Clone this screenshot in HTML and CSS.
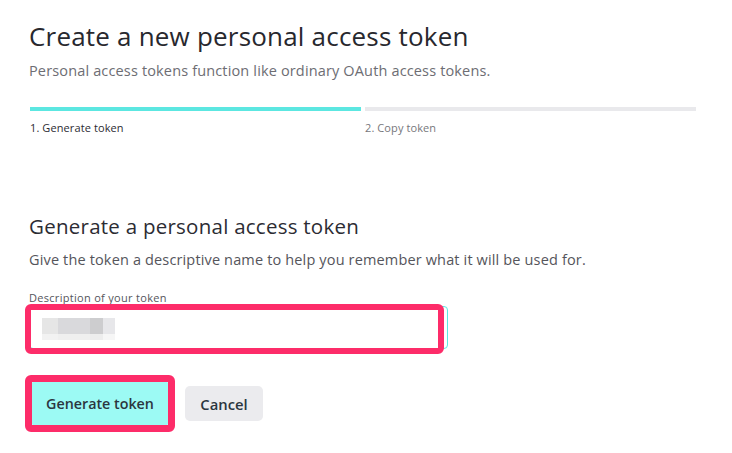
FILE: index.html
```html
<!DOCTYPE html>
<html lang="en">
<head>
<meta charset="utf-8">
<title>Create a new personal access token</title>
<link rel="stylesheet" href="styles.css">
</head>
<body>
<main class="page">
  <h1 class="title">Create a new personal access token</h1>
  <p class="subtitle">Personal access tokens function like ordinary OAuth access tokens.</p>

  <ol class="steps">
    <li class="step step-active"><span class="step-bar"></span><span class="step-label">1. Generate token</span></li>
    <li class="step"><span class="step-bar"></span><span class="step-label">2. Copy token</span></li>
  </ol>

  <section class="form">
    <h2 class="form-title">Generate a personal access token</h2>
    <p class="form-desc">Give the token a descriptive name to help you remember what it will be used for.</p>

    <label class="field-label">Description of your token</label>
    <div class="field">
      <div class="input">
        <span class="blur"><i class="b1"></i><i class="b2"></i><i class="b3"></i><i class="b4"></i></span>
      </div>
      <span class="mark mark-input"></span>
    </div>

    <div class="actions">
      <div class="mark-btn"><button class="btn btn-primary">Generate token</button></div>
      <button class="btn btn-secondary">Cancel</button>
    </div>
  </section>
</main>
</body>
</html>
```

FILE: styles.css
```css
* { box-sizing: border-box; }

body {
  margin: 0;
  background: #ffffff;
  font-family: "Open Sans", "Noto Sans", "Liberation Sans", sans-serif;
  color: #2c2c33;
}

.page {
  width: 668px;
  padding: 20px 0 0 29px;
  box-sizing: content-box;
}

.title {
  margin: 0;
  font-size: 26px;
  line-height: 32px;
  font-weight: 400;
  color: #28282e;
  letter-spacing: 0.2px;
}

.subtitle {
  margin: 9px 0 0;
  font-size: 14.5px;
  line-height: 20px;
  color: #6d6d73;
  letter-spacing: 0.15px;
}

.steps {
  list-style: none;
  margin: 26px 0 0;
  padding: 0 0 0 1px;
  display: grid;
  grid-template-columns: 331px 331px;
  column-gap: 4px;
}

.step { display: flex; flex-direction: column; }

.step-bar {
  height: 4px;
  background: #e9e9ec;
}

.step-active .step-bar { background: #5ce7e1; }

.step-label {
  margin-top: 9px;
  font-size: 11px;
  line-height: 15px;
  color: #77777c;
  letter-spacing: 0.1px;
}

.step-active .step-label { color: #2c2c33; }

.form { margin-top: 78px; }

.form-title {
  margin: 0;
  font-size: 20.5px;
  line-height: 26px;
  font-weight: 500;
  color: #2c2c33;
  letter-spacing: 0.25px;
}

.form-desc {
  margin: 11px 0 0;
  font-size: 14.5px;
  line-height: 20px;
  color: #55555b;
  letter-spacing: 0.15px;
}

.field-label {
  display: block;
  margin-top: 21px;
  font-size: 11px;
  line-height: 13px;
  color: #55555b;
  letter-spacing: 0.3px;
}

.field {
  position: relative;
  width: 419px;
  margin-top: 2px;
}

.input {
  height: 43px;
  border: 1px solid #5ce7e1;
  border-radius: 4px;
  background: #fff;
  display: flex;
  align-items: center;
  padding-left: 12px;
}

.blur {
  display: flex;
  height: 22px;
  margin-top: 2px;
}

.blur i {
  display: block;
  height: 100%;
}

.blur .b1 { width: 16px; background: linear-gradient(#e6e6e6 0, #e6e6e6 75%, #f2f2f2 75%); }
.blur .b2 { width: 32px; background: linear-gradient(#d9d9dc 0, #d9d9dc 75%, #efefef 75%); }
.blur .b3 { width: 13px; background: linear-gradient(#cdcdcf 0, #cdcdcf 75%, #ededed 75%); }
.blur .b4 { width: 12px; background: linear-gradient(#e7e7ea 0, #e7e7ea 75%, #f6f6f6 75%); }

.mark {
  position: absolute;
  border: 6px solid #fd2c69;
  border-radius: 6px;
  pointer-events: none;
}

.mark-input {
  left: -4px;
  top: -2px;
  width: 419px;
  height: 50px;
}

.actions {
  display: flex;
  align-items: center;
  margin-top: 26px;
  margin-left: -4px;
  gap: 10px;
}

.mark-btn {
  border: 7px solid #fd2c69;
  border-radius: 6px;
  width: 150px;
  height: 57px;
  display: flex;
}

.btn {
  font-family: inherit;
  font-size: 14.3px;
  font-weight: 600;
  color: #2b3640;
  border: 0;
  cursor: pointer;
}

.btn-primary {
  flex: 1;
  background: #9cfaf4;
  border-radius: 1px;
  padding: 0;
}

.btn-secondary {
  width: 78px;
  height: 35px;
  background: #ebebee;
  border-radius: 5px;
  padding: 0;
  font-size: 14.8px;
}
```
